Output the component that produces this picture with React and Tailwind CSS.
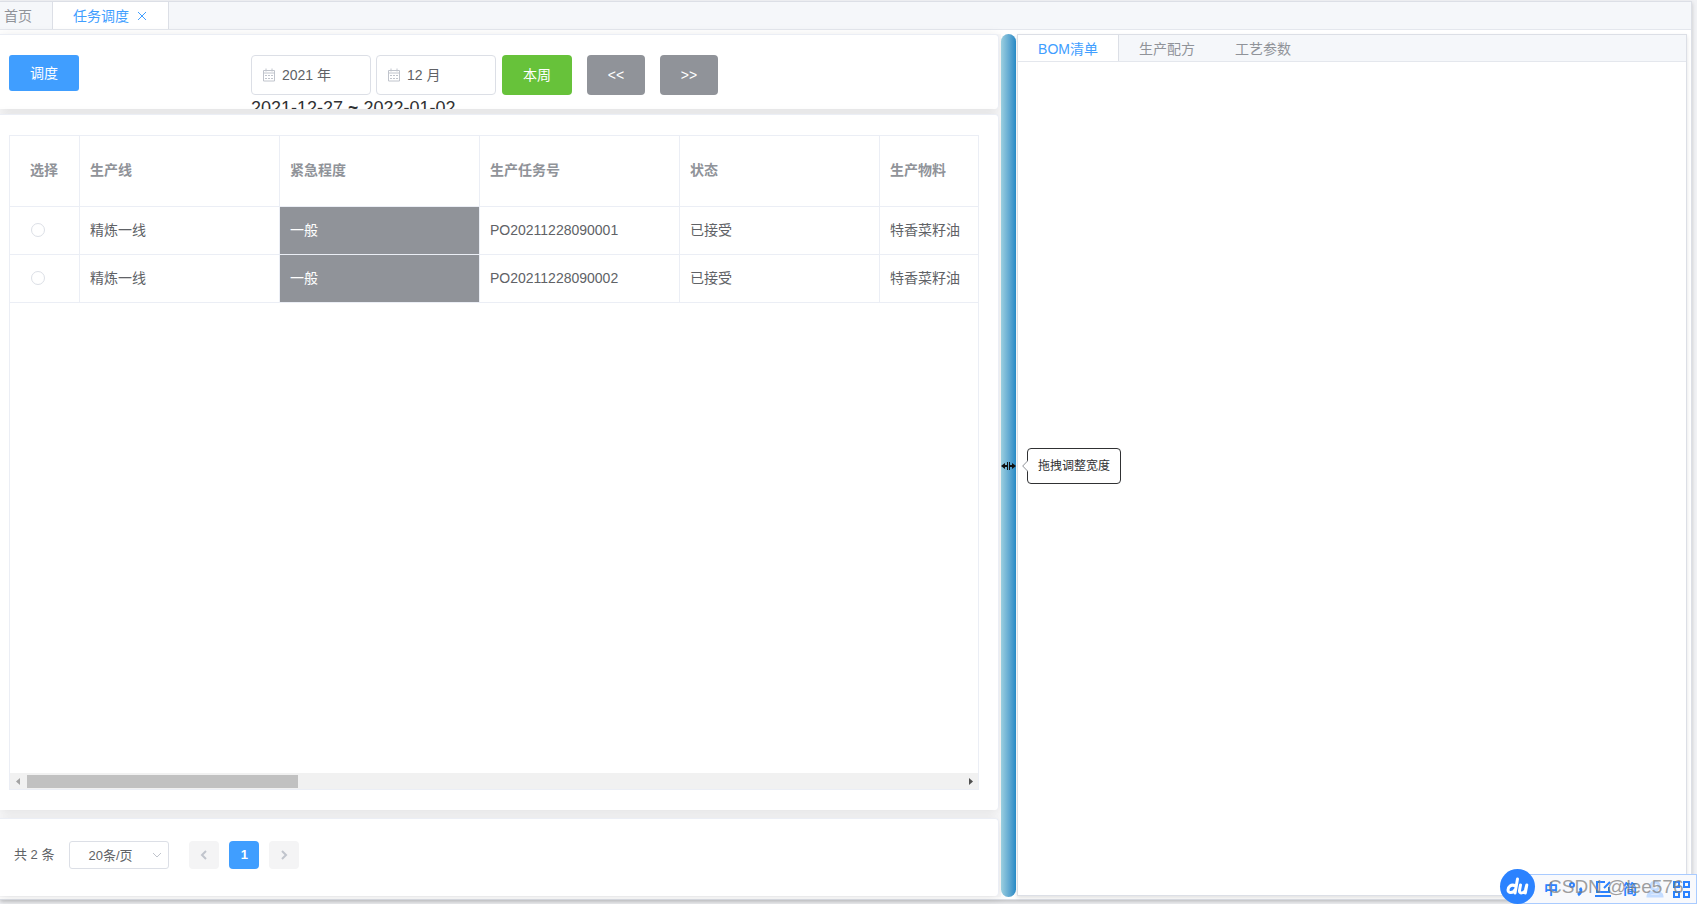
import React, { useState } from 'react';

const columns = [
    { key: 'line', label: '生产线' },
    { key: 'level', label: '紧急程度' },
    { key: 'code', label: '生产任务号' },
    { key: 'status', label: '状态' },
    { key: 'material', label: '生产物料' },
];

const tasks = [
    { line: '精炼一线', level: '一般', code: 'PO20211228090001', status: '已接受', material: '特香菜籽油' },
    { line: '精炼一线', level: '一般', code: 'PO20211228090002', status: '已接受', material: '特香菜籽油' },
];

const CalendarIcon = () => (
    <svg width="14" height="14" viewBox="0 0 14 14" fill="none" stroke="#c0c4cc" className="shrink-0">
        <path d="M1.500 2.500h11v10.500h-11zM1.500 5h11M4 .5v3M10 .5v3" />
        <path d="M3 7.500h8M3 10.500h8" strokeDasharray="2 1" />
    </svg>
);

const Chevron = ({ d, width = 1.5, className = '' }) => (
    <svg width="12" height="12" viewBox="0 0 12 12" fill="none" stroke="#c0c4cc" strokeWidth={width} className={className}>
        <path d={d} />
    </svg>
);

function PickerInput({ label, defaultValue }) {
    return (
        <div className="flex h-10 w-[120px] items-center gap-1.5 rounded border border-[#dcdfe6] bg-white pl-2.5">
            <CalendarIcon />
            <input aria-label={label} defaultValue={defaultValue} className="w-20 min-w-0 text-sm text-[#606266] outline-none" />
        </div>
    );
}

function Card({ className = '', children }) {
    return (
        <section className={`overflow-hidden rounded-r border-t border-r border-[#ebeef5] bg-white shadow-[0_2px_12px_rgba(0,0,0,0.1)] ${className}`}>
            {children}
        </section>
    );
}

function TaskTable() {
    const [selected, setSelected] = useState(null);

    return (
        <div className="flex h-full flex-col overflow-hidden border border-[#ebeef5]">
            <table className="w-[1070px] table-fixed border-separate border-spacing-0 text-left text-sm text-[#606266]">
                <thead>
                    <tr className="h-[71px] text-[#909399]">
                        <th className="w-[70px] border-r border-b border-[#ebeef5] pb-0.5 pl-5 font-bold">选择</th>
                        {columns.map((col) => (
                            <th key={col.key} className="w-[200px] border-r border-b border-[#ebeef5] px-2.5 pb-0.5 font-bold">{col.label}</th>
                        ))}
                    </tr>
                </thead>
                <tbody>
                    {tasks.map((task, i) => (
                        <tr key={task.code} className="h-12">
                            <td className="border-r border-b border-[#ebeef5] pb-0.5 pl-[21px]">
                                <input
                                    type="radio"
                                    name="task"
                                    aria-label={task.code}
                                    checked={selected === i}
                                    onChange={() => setSelected(i)}
                                    className="block h-3.5 w-3.5 appearance-none rounded-full border border-[#dcdfe6] bg-white checked:border-4 checked:border-[#409eff]"
                                />
                            </td>
                            {columns.map((col) => (
                                <td key={col.key} className={`border-r border-b border-[#ebeef5] px-2.5 pb-0.5 ${col.key === 'level' ? 'bg-[#909399] bg-clip-padding text-white' : ''}`}>
                                    {task[col.key]}
                                </td>
                            ))}
                        </tr>
                    ))}
                </tbody>
            </table>
            <div className="mt-auto flex h-4 items-center bg-[#f1f1f1]">
                <svg width="17" height="16" viewBox="0 0 17 16" fill="#a3a3a3"><path d="M10 5v7L6 8.5z" /></svg>
                <div className="h-[13px] w-[28%] bg-[#c1c1c1]" />
                <svg width="17" height="16" viewBox="0 0 17 16" fill="#505050" className="ml-auto"><path d="M8 5v7l4-3.5z" /></svg>
            </div>
        </div>
    );
}

function InputBar() {
    return (
        <div className="absolute right-0 bottom-0 flex h-[30px] w-[180px] items-center border border-[#a9cbff] bg-[#f8f9fc] text-[#2b82ff]">
            <div className="absolute -top-1.5 -left-[18px] flex h-[35px] w-[35px] items-center justify-center rounded-full bg-[#2b82ff]">
                <svg width="24" height="20" viewBox="0 0 24 20" fill="none" stroke="#fff" strokeWidth="3" strokeLinecap="round" strokeLinejoin="round">
                    <path d="M11.5 2 9 16M9.7 9C5 6.500 2 10 2 13c0 3.500 5 3.500 7.300-.5" />
                    <path d="m14.500 8-1 5.500c-.4 3.500 4.500 3 6-.5L20.800 8l-1.500 8" />
                </svg>
            </div>
            <span className="ml-[26px] text-sm font-bold">中</span>
            <svg width="137" height="20" viewBox="0 0 137 20" fill="none" stroke="#2b82ff" strokeWidth="2" className="shrink-0">
                <circle cx="14" cy="6" r="2" />
                <path d="M22 9c2 2 1 5-2 7" strokeWidth="3" />
                <path d="M47 3h-8v10h12V8M37 17h16M46 9l6-6" />
                <g stroke="#c4dcff" strokeWidth="3"><circle cx="97" cy="7" r="4" /><path d="M90 17c0-5 14-5 14 0z" /></g>
                <path d="M116 3h5v5h-5zM126 3h5v5h-5zM116 13h5v5h-5zM126 13h5v5h-5z" />
            </svg>
            <span className="absolute left-[105px] text-sm font-bold">简</span>
            <span className="absolute -top-0.5 left-[30px] text-[19px] leading-7 whitespace-nowrap text-[#808080]/75">CSDN @lee576</span>
        </div>
    );
}

export default function App() {
    return (
        <div className="relative flex h-screen flex-col overflow-hidden bg-[#f1f2f5] pt-px pr-[5px] pb-1 font-['Liberation_Sans','Noto_Sans_CJK_SC',sans-serif] text-sm">
            <div className="flex min-h-0 flex-1 flex-col border-y border-r border-[#dcdfe6] bg-white shadow-[0_2px_4px_rgba(0,0,0,0.2)]">
                <nav className="flex h-7 shrink-0 border-b border-[#e4e7ed] bg-[#f5f7fa]">
                    <button className="pr-5 pl-1 text-[#909399]">首页</button>
                    <div className="flex items-center gap-2 border-x border-[#dcdfe6] bg-white pr-[21px] pl-5 text-[#409eff]">
                        <button>任务调度</button>
                        <button aria-label="关闭">
                            <svg width="10" height="10" viewBox="0 0 10 10" fill="none" stroke="#409eff"><path d="m1 1 8 8M9 1 1 9" /></svg>
                        </button>
                    </div>
                </nav>

                <div className="flex min-h-0 flex-1 pt-1 pb-0.5">
                    <div className="flex w-[59.2%] shrink-0 flex-col bg-[#f9f9fa] pr-0.5 pb-px">
                        <Card className="mb-[5px] h-[75px] shrink-0">
                            <div className="flex items-start pt-5 pl-[9px]">
                                <button className="h-9 w-[70px] rounded-[3px] bg-[#409eff] text-white">调度</button>
                                <div className="ml-[172px]">
                                    <div className="flex">
                                        <PickerInput label="年份" defaultValue="2021 年" />
                                        <div className="ml-[5px]"><PickerInput label="月份" defaultValue="12 月" /></div>
                                        <button className="ml-1.5 h-10 w-[70px] rounded bg-[#67c23a] text-white">本周</button>
                                        <button className="ml-[15px] h-10 w-[58px] rounded bg-[#909399] text-white">&lt;&lt;</button>
                                        <button className="ml-[15px] h-10 w-[58px] rounded bg-[#909399] text-white">&gt;&gt;</button>
                                    </div>
                                    <p className="pt-px text-lg leading-6 text-[#303133]">
                                        2021-12-27 <span className="font-['Noto_Sans',sans-serif] leading-none font-bold">~</span> 2022-01-02
                                    </p>
                                </div>
                            </div>
                        </Card>
                        <Card className="min-h-0 flex-1 pt-5 pr-[19px] pb-5 pl-[9px]">
                            <TaskTable />
                        </Card>
                        <Card className="mt-2 h-[78px] shrink-0">
                            <div className="flex pt-[22px] pl-3.5 text-[13px] leading-7 text-[#606266]">
                                <span>共 2 条</span>
                                <div className="relative ml-[15px]">
                                    <select aria-label="每页条数" className="block h-7 w-[100px] appearance-none rounded-[3px] border border-[#dcdfe6] bg-white pb-0.5 pl-[18px] text-[13px]">
                                        <option>20条/页</option>
                                    </select>
                                    <Chevron d="m2 4 4 4 4-4" width={1} className="pointer-events-none absolute top-2 right-1.5" />
                                </div>
                                <button aria-label="上一页" className="ml-5 flex h-7 w-[30px] items-center justify-center rounded-sm bg-[#f4f4f5]">
                                    <Chevron d="M8 2 4 6l4 4" width={2} />
                                </button>
                                <button className="ml-2.5 h-7 w-[30px] rounded-sm bg-[#409eff] font-bold text-white">1</button>
                                <button aria-label="下一页" className="ml-2.5 flex h-7 w-[30px] items-center justify-center rounded-sm bg-[#f4f4f5]">
                                    <Chevron d="m4 2 4 4-4 4" width={2} />
                                </button>
                            </div>
                        </Card>
                    </div>

                    <div className="relative w-[15px] shrink-0 cursor-col-resize rounded-lg bg-linear-to-r from-[#9bcfdf] to-[#2489c5]">
                        <svg width="15" height="10" viewBox="0 0 15 10" fill="#111" className="absolute top-1/2 left-0 -translate-y-1/2">
                            <path d="M0 5l4-3v2h2V1h1v8H6V6H4v2zM15 5l-4-3v2H9V1H8v8h1V6h2v2z" />
                        </svg>
                        <div role="tooltip" className="absolute top-1/2 left-[26px] z-10 flex h-9 w-[94px] -translate-y-1/2 items-center justify-center rounded border border-[#303133] bg-white text-xs text-[#303133]">
                            拖拽调整宽度
                            <svg width="6" height="12" viewBox="0 0 6 12" fill="#fff" stroke="#909399" className="absolute -left-[6px]"><path d="M6 .5.700 6 6 11.500" /></svg>
                        </div>
                    </div>

                    <section className="mr-1 mb-px ml-px flex-1 border border-[#dcdfe6] bg-white shadow-[0_2px_4px_rgba(0,0,0,0.12)]">
                        <nav className="flex h-[27px] border-b border-[#e4e7ed] bg-[#f5f7fa] text-[#909399]">
                            <button className="border-r border-[#dcdfe6] bg-white px-5 pt-0.5 text-[#409eff]">BOM清单</button>
                            <button className="px-5 pt-0.5">生产配方</button>
                            <button className="px-5 pt-0.5">工艺参数</button>
                        </nav>
                    </section>
                </div>
            </div>
            <InputBar />
        </div>
    );
}
